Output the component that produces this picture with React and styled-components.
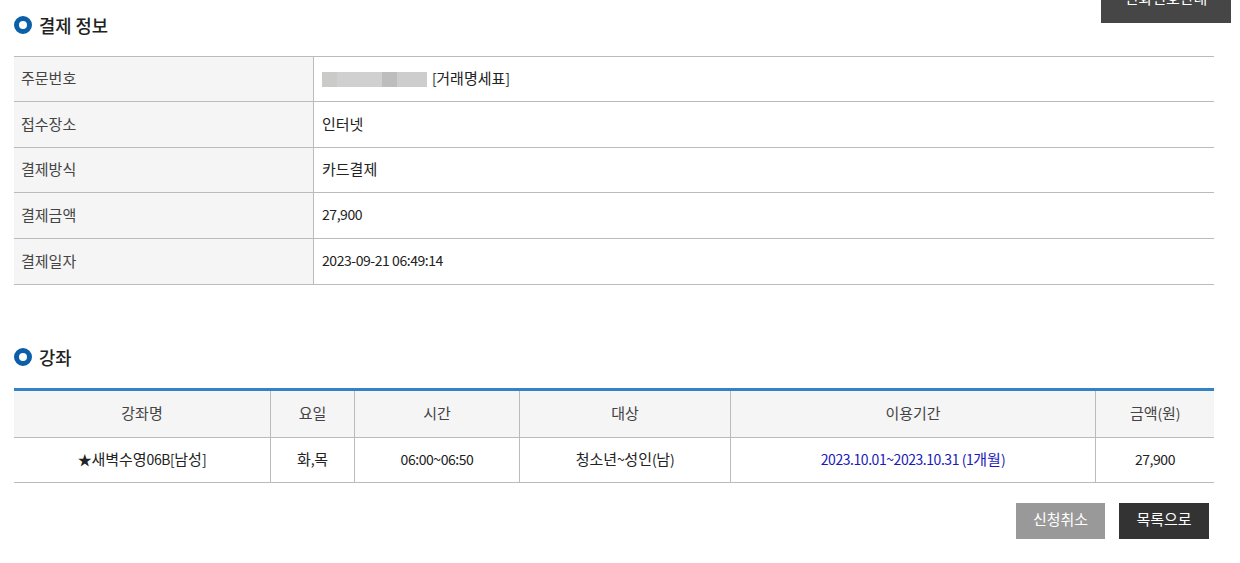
import React from 'react'
import styled, { createGlobalStyle } from 'styled-components'

const GlobalStyle = createGlobalStyle`
  html, body {
    margin: 0;
    padding: 0;
    background: #fff;
    overflow: hidden;
  }
  body {
    font-family: 'Noto Sans CJK KR', sans-serif;
    font-size: 14px;
    letter-spacing: -0.45px;
    color: #222;
  }
`

const Page = styled.div`
  width: 1240px;
  height: 563px;
  padding: 0 26px 0 14px;
  box-sizing: border-box;
  overflow: hidden;
`

const TopBar = styled.div`
  display: flex;
  justify-content: flex-end;
  height: 0;
`

const GuideButton = styled.button`
  flex: none;
  width: 130px;
  height: 36px;
  margin: -13px -17px 0 0;
  padding: 0 0 15px;
  border: 0;
  background: #464646;
  color: #fff;
  font: inherit;
`

const SectionTitle = styled.h2`
  display: flex;
  align-items: center;
  gap: 7px;
  height: 26px;
  margin: 0;
  padding-top: ${p => p.$top}px;
  font-size: 17.7px;
  font-weight: 500;
  letter-spacing: 0;
  line-height: 26px;
  color: #222;
`

const Bullet = styled.span`
  flex: none;
  width: 8px;
  height: 8px;
  border: 5px solid #0b5ea8;
  border-radius: 50%;
`

const InfoTable = styled.div`
  display: grid;
  grid-template-columns: 300px 1fr;
  margin-top: 18px;
  border-top: 1px solid #bbb;
`

const InfoLabel = styled.div`
  display: flex;
  align-items: center;
  height: ${p => p.$h}px;
  padding: 0 0 3px 7px;
  box-sizing: border-box;
  background: #f5f5f5;
  border-right: 1px solid #bbb;
  border-bottom: 1px solid #bbb;
  color: #444;
`

const InfoValue = styled.div`
  display: flex;
  align-items: center;
  white-space: pre;
  height: ${p => p.$h}px;
  padding: 0 0 3px 8px;
  box-sizing: border-box;
  border-bottom: 1px solid #bbb;
`

const Masked = styled.span`
  display: inline-flex;
  width: 105px;
  height: 15px;
  margin: 3px 5px 0 0;
  background: linear-gradient(90deg, #cacac8 0 15px, #d0d0d0 15px 60px, #bdbdbd 60px 75px, #cdcdcd 75px 100%);
`

const CourseTable = styled.div`
  display: grid;
  grid-template-columns: 257px 84px 165px 211px 365px 1fr;
  margin-top: 18px;
  border-top: 3px solid #3481c6;
`

const Cell = styled.div`
  display: flex;
  align-items: center;
  justify-content: center;
  white-space: pre;
  height: ${p => p.$h}px;
  padding-bottom: 3px;
  box-sizing: border-box;
  background: ${p => (p.$head ? '#f5f5f5' : '#fff')};
  color: ${p => (p.$head ? '#444' : p.$link ? '#1a1ab8' : '#222')};
  border-bottom: 1px solid #bbb;
  border-right: ${p => (p.$last ? '0' : '1px solid #bbb')};
`

const Actions = styled.div`
  display: flex;
  justify-content: flex-end;
  gap: 14px;
  margin: 20px 5px 0 0;
`

const ActionButton = styled.button`
  width: ${p => p.$w}px;
  height: 36px;
  padding: 0 0 5px;
  border: 0;
  background: ${p => p.$bg};
  color: #fff;
  font: inherit;
`

const Han = styled.span`
  font-size: 15px;
  letter-spacing: 0;
`

// hangul runs are set larger than the digits, as in the original font
const Mixed = ({ text }) =>
  text.split(/([\uac00-\ud7a3]+)/).map((part, i) =>
    i % 2 ? <Han key={i}>{part}</Han> : part
  )

const infoRows = [
  { label: '주문번호', h: 45, masked: true, value: '[거래명세표]' },
  { label: '접수장소', h: 46, value: '인터넷' },
  { label: '결제방식', h: 45, value: '카드결제' },
  { label: '결제금액', h: 46, value: '27,900' },
  { label: '결제일자', h: 46, value: '2023-09-21 06:49:14' },
]

const courseHead = ['강좌명', '요일', '시간', '대상', '이용기간', '금액(원)']
const courseRow = ['★새벽수영06B[남성]', '화,목', '06:00~06:50', '청소년~성인(남)', '2023.10.01~2023.10.31 (1개월)', '27,900']

const App = () => {
  return (
    <Page>
      <GlobalStyle />
      <TopBar>
        <GuideButton><Han>전화번호안내</Han></GuideButton>
      </TopBar>
      <SectionTitle $top={12}>
        <Bullet />
        결제 정보
      </SectionTitle>
      <InfoTable>
        {infoRows.map(row => (
          <React.Fragment key={row.label}>
            <InfoLabel $h={row.h}><Han>{row.label}</Han></InfoLabel>
            <InfoValue $h={row.h}>
              {row.masked && <Masked />}
              <span><Mixed text={row.value} /></span>
            </InfoValue>
          </React.Fragment>
        ))}
      </InfoTable>
      <SectionTitle $top={59}>
        <Bullet />
        강좌
      </SectionTitle>
      <CourseTable>
        {courseHead.map((text, i) => (
          <Cell key={text} $h={47} $head $last={i === 5}><span><Mixed text={text} /></span></Cell>
        ))}
        {courseRow.map((text, i) => (
          <Cell key={text} $h={45} $link={i === 4} $last={i === 5}><span><Mixed text={text} /></span></Cell>
        ))}
      </CourseTable>
      <Actions>
        <ActionButton $w={89} $bg="#999"><Han>신청취소</Han></ActionButton>
        <ActionButton $w={90} $bg="#333"><Han>목록으로</Han></ActionButton>
      </Actions>
    </Page>
  )
}

export default App
